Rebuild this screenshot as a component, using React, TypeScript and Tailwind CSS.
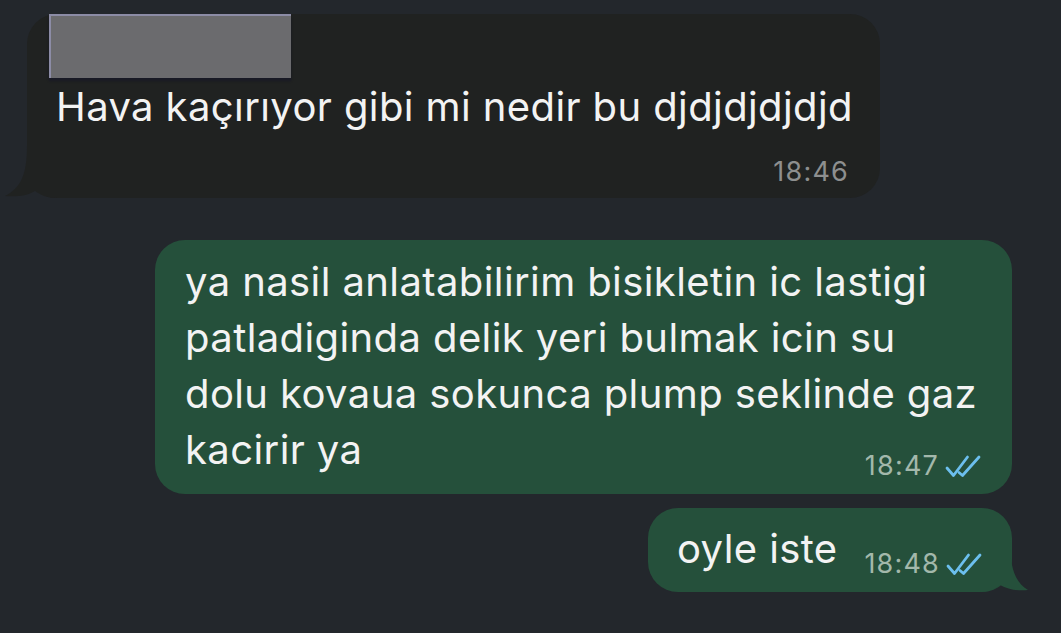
import React from "react";

const Checks = () => (
  <svg width="37" height="23" viewBox="0 0 37 23" fill="none" className="ml-[6px] mb-[3px]">
    <path d="M2 13 L8.5 20.5 L22.5 2" stroke="#6cbfee" strokeWidth="2.8" strokeLinecap="round" strokeLinejoin="round" />
    <path d="M14 17.5 L17.5 20.5 L34 2" stroke="#6cbfee" strokeWidth="2.8" strokeLinecap="round" strokeLinejoin="round" />
  </svg>
);

const InTail = () => (
  <svg width="50" height="52" viewBox="0 0 50 52" className="absolute left-[-22px] bottom-0">
    <path d="M22 0 C22 28 16 42 0 50 C10 51 22 50 30 45 C36 49 42 52 50 52 L50 0 Z" fill="#202221" />
  </svg>
);

const OutTail = () => (
  <svg width="50" height="52" viewBox="0 0 50 52" className="absolute right-[-18px] bottom-0">
    <path d="M30 0 C30 28 35 42 48 50 C40 51 28 50 20 45 C14 49 8 52 0 52 L0 0 Z" fill="#25503b" />
  </svg>
);

export default function App() {
  return (
    <div className="w-[1061px] h-[633px] overflow-hidden bg-[#23272c] flex flex-col font-['Inter','Noto_Sans',sans-serif] text-[#f3f3f3]">
      {/* incoming */}
      <div className="relative ml-[27px] mt-[14px] w-[853px] h-[184px] rounded-[30px] bg-[#202221] flex flex-col pl-[29px] pr-[31px]">
        <InTail />
        <div className="ml-[-7px] w-[242px] h-[64px] bg-[#6b6b6e] border-t-[2px] border-l-[2px] border-[#8c8ca6] shadow-[0_3px_2px_rgba(20,20,40,0.6)]" />
        <div className="mt-[1px] text-[40px] leading-[56px] tracking-[0.4px] whitespace-nowrap">Hava kaçırıyor gibi mi nedir bu djdjdjdjdjd</div>
        <div className="mt-[22px] self-end text-[27px] leading-[30px] tracking-[1.2px] text-[#8d8f8f]">18:46</div>
      </div>

      {/* outgoing */}
      <div className="self-end mr-[49px] mt-[42px] w-[857px] h-[254px] rounded-[30px] bg-[#25503b] flex flex-col pl-[30px] pr-[30px] pt-[14px]">
        <div className="text-[40px] leading-[56px] tracking-[0.4px] whitespace-nowrap">
          <div>ya nasil anlatabilirim bisikletin ic lastigi</div>
          <div>patladiginda delik yeri bulmak icin su</div>
          <div>dolu kovaua sokunca plump seklinde gaz</div>
          <div>kacirir ya</div>
        </div>
        <div className="mt-[-27px] self-end flex items-end text-[27px] leading-[30px] tracking-[1.2px] text-[#a3b8ab]">
          <span>18:47</span>
          <Checks />
        </div>
      </div>

      <div className="relative self-end mr-[49px] mt-[14px] w-[364px] h-[84px] rounded-[30px] bg-[#25503b] flex items-end justify-between pl-[29px] pr-[29px] pb-[13px]">
        <OutTail />
        <div className="relative mb-[2px] text-[40px] leading-[56px] tracking-[0.4px] whitespace-nowrap">oyle iste</div>
        <div className="relative flex items-end text-[27px] leading-[30px] tracking-[1.2px] text-[#a3b8ab]">
          <span>18:48</span>
          <Checks />
        </div>
      </div>
    </div>
  );
}
